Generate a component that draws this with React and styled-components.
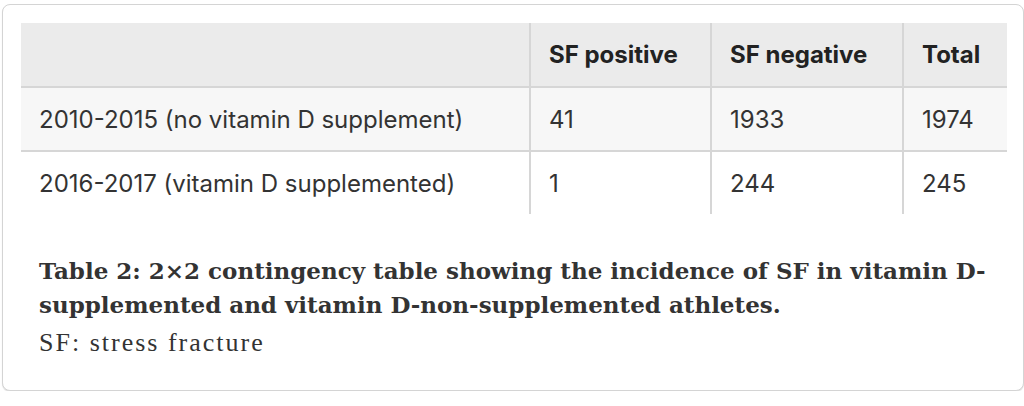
import styled, { createGlobalStyle } from "styled-components";

const rows = [
  { label: "2010-2015 (no vitamin D supplement)", pos: "41", neg: "1933", total: "1974" },
  { label: "2016-2017 (vitamin D supplemented)", pos: "1", neg: "244", total: "245" },
];

export default function App() {
  return (
    <>
      <GlobalStyle />
      <Page>
        <Card>
          <Table>
            <colgroup>
              <col style={{ width: 509 }} />
              <col style={{ width: 181 }} />
              <col style={{ width: 192 }} />
              <col />
            </colgroup>
            <thead>
              <HeadRow>
                <Th />
                <Th>SF positive</Th>
                <Th>SF negative</Th>
                <Th>Total</Th>
              </HeadRow>
            </thead>
            <tbody>
              {rows.map((r, i) => (
                <Row key={r.label} $striped={i % 2 === 0} $last={i === rows.length - 1}>
                  <Td>{r.label}</Td>
                  <Td>{r.pos}</Td>
                  <Td>{r.neg}</Td>
                  <Td>{r.total}</Td>
                </Row>
              ))}
            </tbody>
          </Table>
          <Caption>
            <CaptionTitle>
              Table 2: 2×2 contingency table showing the incidence of SF in vitamin D-supplemented
              and vitamin D-non-supplemented athletes.
            </CaptionTitle>
            <CaptionNote>SF: stress fracture</CaptionNote>
          </Caption>
        </Card>
      </Page>
    </>
  );
}

const GlobalStyle = createGlobalStyle`
  html, body {
    margin: 0;
    background: #fff;
    overflow: hidden;
  }
  body {
    font-family: Inter, "Noto Sans", sans-serif;
    color: #333;
  }
`;

const Page = styled.div`
  padding: 4px 0 0 2px;
  width: 1024px;
  box-sizing: border-box;
`;

const Card = styled.div`
  box-sizing: border-box;
  width: 1022px;
  height: 387px;
  border: 1px solid #d4d4d4;
  border-radius: 8px;
  box-shadow: 0 1px 1px rgba(0, 0, 0, 0.12);
  padding: 18px 15px 0 18px;
  background: #fff;
`;

const Table = styled.table`
  width: 986px;
  border-collapse: collapse;
  table-layout: fixed;
  font-size: 24px;
`;

const HeadRow = styled.tr`
  background: #ebebeb;
  height: 64px;
  border-bottom: 2px solid #d6d6d6;
`;

const Th = styled.th`
  text-align: left;
  font-weight: 700;
  color: #222;
  padding: 0 18px;
  & + & {
    border-left: 2px solid #d6d6d6;
  }
`;

const Row = styled.tr`
  height: ${(p) => (p.$last ? 63 : 64)}px;
  background: ${(p) => (p.$striped ? "#f7f7f7" : "#fff")};
  border-bottom: ${(p) => (p.$last ? "none" : "2px solid #d6d6d6")};
`;

const Td = styled.td`
  padding: 0 18px;
  color: #333;
  white-space: nowrap;
  & + & {
    border-left: 2px solid #d6d6d6;
  }
`;

const Caption = styled.div`
  padding: 40px 0 0 18px;
  color: #333;
`;

const CaptionTitle = styled.div`
  font-family: "DejaVu Serif", serif;
  font-weight: 700;
  font-size: 23px;
  line-height: 34px;
  width: 970px;
`;

const CaptionNote = styled.div`
  font-family: "Liberation Serif", serif;
  font-size: 26px;
  line-height: 42px;
  letter-spacing: 2px;
`;
